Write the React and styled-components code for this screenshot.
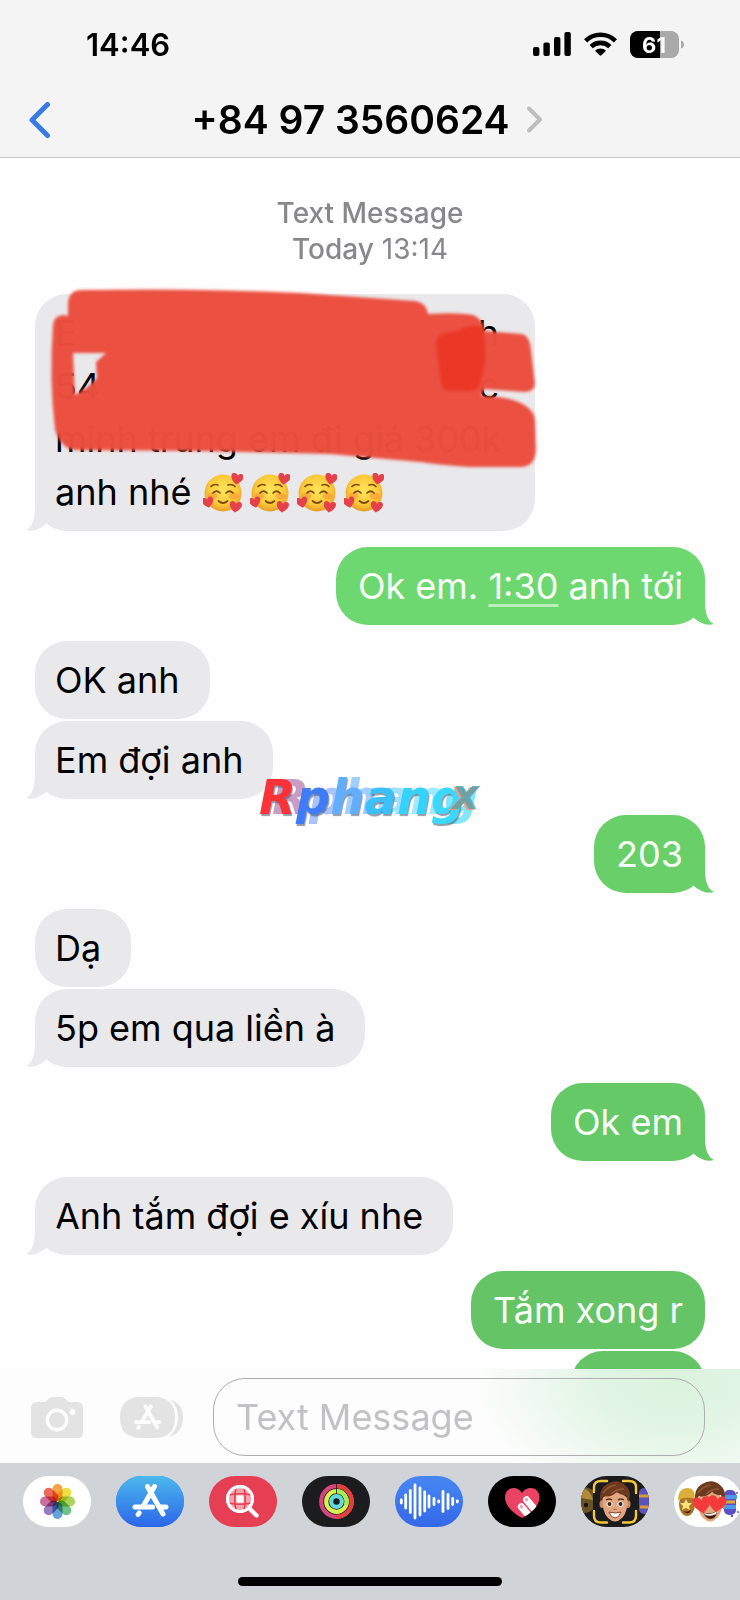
import React from "react";
import styled, { createGlobalStyle, css } from "styled-components";

const GlobalStyle = createGlobalStyle`
  *, *::before, *::after { box-sizing: border-box; }
  body {
    margin: 0;
    background: #fefefe;
    color: #000;
    font-family: Inter, "Liberation Sans", sans-serif;
  }
  button, input { font: inherit; color: inherit; }
  button { border: 0; padding: 0; background: none; cursor: pointer; }
  svg { display: block; }
`;

const Screen = styled.div`
  position: relative;
  display: flex;
  flex-direction: column;
  height: 100vh;
  overflow: hidden;
`;

/* ---------- header ---------- */

const Header = styled.header`
  flex: none;
  background: #f4f4f4;
  border-bottom: 1px solid #c8c8ca;
`;

const StatusBar = styled.div`
  display: flex;
  align-items: center;
  justify-content: space-between;
  height: 82px;
  padding: 6px 56px 0 86px;
`;

const Clock = styled.time`
  font-size: 31px;
  font-weight: 600;
`;

const StatusIcons = styled.div`
  display: flex;
  align-items: center;
  gap: 13px;
`;

const NavBar = styled.div`
  display: grid;
  grid-template-columns: 1fr auto 1fr;
  align-items: center;
  height: 75px;
  padding: 0 34px 0 28px;
`;

const BackButton = styled.button`
  justify-self: start;
`;

const ContactButton = styled.button`
  display: flex;
  align-items: center;
  gap: 16px;
`;

const ContactName = styled.h1`
  margin: 0;
  font-size: 39px;
  font-weight: 600;
  line-height: 48px;
  white-space: nowrap;
`;

/* ---------- thread ---------- */

const Thread = styled.main`
  flex: 1;
  min-height: 0;
  overflow: hidden;
  padding: 37px 35px 0;
`;

const ThreadInfo = styled.p`
  margin: 0 0 27px;
  color: #88888b;
  font-size: 28px;
  line-height: 36px;
  text-align: center;
`;

const Strong = styled.span`
  font-weight: 500;
`;

const Messages = styled.ol`
  display: flex;
  flex-direction: column;
  align-items: flex-start;
  margin: 0;
  padding: 0;
  list-style: none;
`;

const tailShape = css`
  &::after {
    content: "";
    position: absolute;
    bottom: 0;
    ${(p) => (p.$sent ? "right: -9px;" : "left: -9px;")}
    width: 34px;
    height: 34px;
    background: inherit;
    clip-path: ${(p) =>
      p.$sent
        ? 'path("M0 8 L25 0 C25 18 25 28 34 33 C26 35 20 32 14 27 Z")'
        : 'path("M34 8 L9 0 C9 18 9 28 0 33 C8 35 14 32 20 27 Z")'};
  }
`;

const Bubble = styled.li`
  position: relative;
  flex: none;
  align-self: ${(p) => (p.$sent ? "flex-end" : "flex-start")};
  min-width: ${(p) => p.$minWidth || 0}px;
  max-width: 500px;
  min-height: 78px;
  margin-top: ${(p) => (p.$follows ? 2 : 16)}px;
  padding: ${(p) => (p.$sent ? "13px 22px 12px" : "13px 30px 12px 20px")};
  border-radius: 32px;
  background: ${(p) => (p.$sent ? p.$tone : "#e9e9eb")};
  color: ${(p) => (p.$sent ? "#fafffa" : "#000")};
  font-size: 36px;
  line-height: 53px;
  white-space: nowrap;
  ${(p) => p.$tail && tailShape}
  &:first-child { margin-top: 0; }
`;

const TimeLink = styled.a`
  color: inherit;
  text-decoration: underline;
  text-decoration-color: #b9efb9;
  text-decoration-thickness: 3px;
  text-underline-offset: 5px;
  text-decoration-skip-ink: none;
`;

const LongText = styled.div`
  width: 450px;
`;

const Line = styled.div`
  display: flex;
  justify-content: ${(p) => (p.$spread ? "space-between" : "flex-start")};
  align-items: center;
  padding-right: 6px;
`;

const EmojiRun = styled.span`
  display: flex;
  gap: 7px;
  margin-left: 12px;
`;

const Redaction = styled.svg`
  position: absolute;
  top: -14px;
  left: 5px;
  z-index: 1;
`;

const Watermark = styled.div`
  position: absolute;
  top: 766px;
  left: 259px;
  z-index: 2;
  font-family: "DejaVu Sans", sans-serif;
  font-size: 48px;
  font-weight: 700;
  font-style: italic;
  line-height: 62px;
  white-space: nowrap;
`;

const Letter = styled.span`
  color: ${(p) => p.$color};
  text-shadow: 1px 2px 1px #4a5a6a99, 13px 0 0 ${(p) => p.$ghost};
`;

const SmallLetter = styled.span`
  position: absolute;
  right: -14px;
  bottom: 9px;
  font-size: 42px;
  line-height: 48px;
  color: #4fa3aecc;
  text-shadow: -2px 1px 0 #f39a80;
`;

/* ---------- composer ---------- */

const Composer = styled.form`
  flex: none;
  display: flex;
  align-items: center;
  height: 94px;
  padding: 2px 35px 0 31px;
  background:
    radial-gradient(ellipse 200px 130px at 91% 10%, #dbf3de 0%, #e2f5e5 40%, #fdfdfd00 100%),
    #fdfdfd;
`;

const ToolButton = styled.button`
  flex: none;
  margin-right: ${(p) => p.$gap}px;
`;

const TextField = styled.input`
  flex: 1;
  min-width: 0;
  height: 78px;
  padding: 0 22px;
  border: 1px solid #aeaeb0;
  border-radius: 32px;
  outline: 0;
  background: transparent;
  font-size: 36px;
  &::placeholder { color: #c2c2c4; opacity: 1; }
`;

const Footer = styled.footer`
  flex: none;
  height: 137px;
  overflow: hidden;
  background: #d0d3d8;
`;

const AppStrip = styled.ul`
  display: flex;
  gap: 25px;
  margin: 0;
  padding: 13px 0 0 23px;
  list-style: none;
`;

const AppButton = styled.button`
  display: block;
  width: 68px;
  height: 51px;
  overflow: hidden;
  border-radius: 26px;
  background: ${(p) => p.$bg};
`;

const HomeIndicator = styled.div`
  width: 264px;
  height: 9px;
  margin: 50px auto 0;
  border-radius: 5px;
  background: #000;
`;

/* ---------- drawings ---------- */

const Signal = () => (
  <svg width="38" height="24" viewBox="0 0 38 24" role="img" aria-label="Signal">
    <rect x="0" y="15" width="6.4" height="9" rx="2" />
    <rect x="10.4" y="10.5" width="6.4" height="13.5" rx="2" />
    <rect x="21" y="5" width="6.4" height="19" rx="2" />
    <rect x="31.4" y="0" width="6.4" height="24" rx="2" />
  </svg>
);

const Wifi = () => (
  <svg width="33" height="24" viewBox="0 0 33 24" role="img" aria-label="Wi-Fi">
    <g fill="none" stroke="#000" strokeWidth="4.6">
      <path d="M1.6 8.8 A21.5 21.5 0 0 1 31.4 8.8" />
      <path d="M7.2 14.6 A13.4 13.4 0 0 1 25.8 14.6" />
    </g>
    <path d="M11 18.8 A8 8 0 0 1 22 18.8 L17.4 23.3 Q16.5 24 15.6 23.3 Z" />
  </svg>
);

const Battery = () => (
  <svg width="54" height="27" viewBox="0 0 54 27" role="img" aria-label="Battery 61%">
    <defs>
      <clipPath id="cell"><rect width="49" height="27" rx="8" /></clipPath>
    </defs>
    <g clipPath="url(#cell)">
      <rect width="49" height="27" fill="#a9a9a9" />
      <rect width="30" height="27" fill="#000" />
    </g>
    <path d="M51 9.5 Q54 10.5 54 13.5 Q54 16.5 51 17.5 Z" fill="#a9a9a9" />
    <text x="24" y="21.5" textAnchor="middle" fontSize="22" fontWeight="700" fill="#fff">61</text>
  </svg>
);

const Chevron = ({ left }) =>
  left ? (
    <svg width="24" height="38" viewBox="0 0 24 38">
      <path d="M19.5 3.5 L4 19 L19.5 34.5" fill="none" stroke="#3a7ae6" strokeWidth="5" strokeLinecap="round" strokeLinejoin="round" />
    </svg>
  ) : (
    <svg width="17" height="27" viewBox="0 0 17 27">
      <path d="M3 2.5 L14 13.5 L3 24.5" fill="none" stroke="#bebec0" strokeWidth="4" strokeLinecap="round" strokeLinejoin="round" />
    </svg>
  );

const Heart = ({ x, y, s = 1, r = 0, fill = "#e5414a" }) => (
  <path
    transform={`translate(${x} ${y}) rotate(${r}) scale(${s})`}
    fill={fill}
    d="M0 5 C-8 0 -6 -6 -2.5 -5 C-1 -4.8 0 -3.5 0 -2.5 C0 -3.5 1 -4.8 2.5 -5 C6 -6 8 0 0 5Z"
  />
);

const LoveFace = () => (
  <svg width="40" height="40" viewBox="0 0 40 40" role="img" aria-label="🥰">
    <defs>
      <radialGradient id="skin" cx="50%" cy="42%" r="56%">
        <stop offset="0" stopColor="#ffe45c" />
        <stop offset="0.7" stopColor="#fcc938" />
        <stop offset="1" stopColor="#e9a02a" />
      </radialGradient>
    </defs>
    <circle cx="20" cy="20" r="18.5" fill="url(#skin)" />
    <ellipse cx="9.5" cy="23" rx="5" ry="3.5" fill="#f58a3a" opacity="0.5" />
    <ellipse cx="30.5" cy="23" rx="5" ry="3.5" fill="#f58a3a" opacity="0.5" />
    <g fill="none" stroke="#7a4a14" strokeWidth="1.7" strokeLinecap="round">
      <path d="M8 13.5 Q11 10.5 15 12" />
      <path d="M25 12 Q29 10.5 32 13.5" />
      <path d="M10 20 Q13.5 16.5 17 20" />
      <path d="M23 20 Q26.5 16.5 30 20" />
      <path d="M15.5 28 Q20 32 24.5 28" />
    </g>
    <Heart x={34} y={6} s={1.1} r={10} />
    <Heart x={5} y={29.5} s={1.05} r={-12} />
    <Heart x={32.5} y={34} s={1.1} r={8} />
  </svg>
);

const Scribble = () => (
  <Redaction width="506" height="194" viewBox="40 280 506 194" aria-hidden="true">
    <defs>
      <filter id="soft" x="-5%" y="-5%" width="110%" height="110%">
        <feGaussianBlur stdDeviation="1.4" />
      </filter>
    </defs>
    <g filter="url(#soft)">
      <path
        fill="#eb4e3e"
        fillOpacity="0.985"
        fillRule="evenodd"
        d="M68 303 Q69 290 82 290 Q200 288 300 293 L415 301 Q427 303 428 314 Q455 312 473 315 Q482 318 485 331
           L522 334 Q530 336 531 350 L535 384 Q534 392 524 392 L484 389 L481 396 Q500 396 513 400 Q534 407 535 420
           L536 450 Q535 466 522 467 L470 467 Q440 465 420 462 L330 454 L200 451 L76 450 Q60 449 55 429 Q49 380 53 325 Q54 315 64 315 L68 316 Z
           M73 353 L75 395 Q88 388 97 378 L96 362 L106 353 Z"
      />
      <path
        fill="#eb3826"
        d="M436 345 Q436 334 446 333 L460 330 Q468 325 480 326 Q485 328 485 345 Q487 360 481 380 Q480 391 468 391 L448 391 Q441 390 440 376 Z"
      />
    </g>
  </Redaction>
);

const Camera = () => (
  <svg width="52" height="41" viewBox="0 0 52 41">
    <path fill="#e3e3e4" d="M6 5 H14 L18 1.5 Q19.5 0 22 0 H30 Q32.5 0 34 1.5 L38 5 H46 Q52 5 52 11 V35 Q52 41 46 41 H6 Q0 41 0 35 V11 Q0 5 6 5Z" />
    <circle cx="26" cy="23" r="9.7" fill="none" stroke="#fdfdfd" strokeWidth="3.4" />
    <circle cx="41.5" cy="15" r="3" fill="#fdfdfd" />
  </svg>
);

const StoreGlyph = ({ color, ...rest }) => (
  <g fill="none" stroke={color} strokeWidth="5" strokeLinecap="round" {...rest}>
    <path d="M31.5 10.5 L47 38" />
    <path d="M38.5 10.5 L27.5 29.5" />
    <path d="M19 31 H36.5 M44.5 31 H50" />
    <path d="M23.2 37 L22 38.5" />
  </g>
);

const StoreOutline = () => (
  <svg width="64" height="41" viewBox="0 0 64 41">
    <path fill="#e3e3e4" d="M21 0 H34 Q55 0 55 20.5 Q55 41 34 41 H21 Q0 41 0 20.5 Q0 0 21 0Z" />
    <path fill="#e3e3e4" d="M50 2.5 Q63 6 63 20.5 Q63 36 49 40 Q58 32 58 20.5 Q58 9 50 2.5Z" />
    <StoreGlyph color="#fdfdfd" transform="translate(1.5 1.5) scale(0.76)" />
  </svg>
);

const petals = ["#f7941d", "#ecd91f", "#9ccb3b", "#56b86f", "#4a90d2", "#8464b4", "#c4568c", "#e8503f"];

const Petal = styled.rect`
  mix-blend-mode: multiply;
`;

const PhotosArt = () => (
  <g>
    {petals.map((fill, i) => (
      <Petal
        key={fill}
        x="29.5"
        y="8"
        width="10"
        height="17"
        rx="5"
        fill={fill}
        opacity="0.85"
        transform={`rotate(${i * 45} 34.5 25.5)`}
      />
    ))}
  </g>
);

const StoreArt = () => (
  <g>
    <defs>
      <linearGradient id="store" x2="0" y2="1">
        <stop stopColor="#4ab8ec" />
        <stop offset="1" stopColor="#2d66ea" />
      </linearGradient>
    </defs>
    <rect width="68" height="51" fill="url(#store)" />
    <StoreGlyph color="#fff" />
  </g>
);

const ImagesArt = () => (
  <g fill="none" stroke="#fff">
    <circle cx="31" cy="23" r="12.5" fill="#f5a3ac" strokeWidth="3" />
    <rect x="27.5" y="19.5" width="7" height="7" fill="#fff" stroke="none" />
    <g stroke="#e63e53" strokeWidth="1.6">
      <path d="M20 19 Q31 16.5 42 19 M20 27 Q31 29.5 42 27" />
      <path d="M27 12 Q24.5 23 27 34 M35 12 Q37.5 23 35 34" />
    </g>
    <circle cx="31" cy="23" r="12.5" strokeWidth="2.8" />
    <path d="M40.5 32.5 L47.5 39.5" strokeWidth="4.4" strokeLinecap="round" />
  </g>
);

const FitnessArt = () => (
  <g fill="none" strokeWidth="4.2">
    <circle cx="34.5" cy="25.5" r="15.3" stroke="#d6437f" />
    <path d="M34.5 10.2 A15.3 15.3 0 0 1 34.5 40.8" stroke="#e2403f" />
    <circle cx="34.5" cy="25.5" r="10.3" stroke="#d8f04a" />
    <path d="M34.5 15.2 A10.3 10.3 0 0 1 44 29" stroke="#a5ee52" />
    <circle cx="34.5" cy="25.5" r="5.3" stroke="#63d9dd" />
    <path d="M34.5 8 V18" stroke="#1c1c1e" strokeWidth="0.8" />
  </g>
);

const bars = [[6.3, 6], [10.7, 16], [15.3, 25], [20, 36], [25, 30], [29.7, 22], [34, 14], [39, 9], [43.7, 4], [48, 23], [53, 17], [57.7, 9], [62.3, 4]];

const AudioArt = () => (
  <g>
    {bars.map(([x, h]) => (
      <rect key={x} x={x - 1.4} y={25.5 - h / 2} width="2.8" height={h} rx="1.4" fill="#fff" />
    ))}
  </g>
);

const TouchArt = () => (
  <g>
    <defs>
      <clipPath id="touch-heart">
        <path d="M34 42 C24 37 17 29 17 21.5 C17 11 29 9 34 17 C39 9 51.5 11 51.5 21.5 C51.5 29 44 37 34 42Z" />
      </clipPath>
    </defs>
    <g clipPath="url(#touch-heart)">
      <rect width="68" height="51" fill="#ec4264" />
      <g transform="rotate(-40 38 30)" fill="#fff">
        <rect x="30.5" y="24" width="7" height="26" rx="3.5" />
        <rect x="39" y="22" width="7" height="26" rx="3.5" />
        <rect x="32.5" y="25.5" width="3" height="4" rx="1.5" fill="#f2a3b4" />
        <rect x="41" y="23.5" width="3" height="4" rx="1.5" fill="#f2a3b4" />
      </g>
    </g>
  </g>
);

const Face = ({ children }) => (
  <g>
    <ellipse cx="21" cy="28" rx="2.5" ry="4" fill="#c98a63" />
    <ellipse cx="47" cy="28" rx="2.5" ry="4" fill="#c98a63" />
    <path d="M21.5 22 Q21 36 27 42 Q34 49 41 42 Q47 36 46.5 22 Q34 10 21.5 22Z" fill="#e3a780" />
    <path d="M19.5 26 Q17 13 26 8 Q36 2 44 9 Q51 14 48 26 Q46 24 45 19 Q40 20 36 16 Q29 22 23 20 Q21 22 19.5 26Z" fill="#6b3a1f" />
    <path d="M22 17 Q27 10 35 9 M30 18 Q35 13 43 13" fill="none" stroke="#935a34" strokeWidth="1.5" />
    {children}
  </g>
);

const MemojiArt = () => (
  <g>
    <circle cx="3" cy="24" r="13" fill="#6b5328" />
    <path d="M0 12 Q9 12 12 24 L0 22Z" fill="#b08a34" />
    <circle cx="5" cy="29" r="2.2" fill="#1c1410" />
    <rect x="58" y="12" width="12" height="26" rx="5" fill="#5b54b8" />
    <path d="M58 20 H68 M59 31 H68" stroke="#d59a3c" strokeWidth="3" />
    <rect x="12" y="3" width="44" height="45" rx="9" fill="#1b1b1d" />
    <Face>
      <ellipse cx="28.5" cy="28" rx="3" ry="2.6" fill="#fff" />
      <ellipse cx="39.5" cy="28" rx="3" ry="2.6" fill="#fff" />
      <circle cx="28.5" cy="28" r="2" fill="#3b2214" />
      <circle cx="39.5" cy="28" r="2" fill="#3b2214" />
      <path d="M25 24 Q28 22 31 24 M37 24 Q40 22 43 24" fill="none" stroke="#5a3018" strokeWidth="1.5" />
      <path d="M32.5 33 Q34 34 35.5 33" fill="none" stroke="#b06a48" strokeWidth="1.2" />
      <path d="M28 36 Q34 38 40 36 Q38 42 34 42 Q30 42 28 36Z" fill="#fff" stroke="#8a4030" strokeWidth="1" />
    </Face>
    <path
      d="M13 16 V11 Q13 5 20 5 H26 M42 5 H48 Q55 5 55 11 V17 M55 35 V40 Q55 46.5 48 46.5 H42 M26 46.5 H20 Q13 46.5 13 40 V35"
      fill="none"
      stroke="#f3c93c"
      strokeWidth="2.4"
      strokeLinecap="round"
    />
  </g>
);

const StickerArt = () => (
  <g transform="translate(1 0)">
    <ellipse cx="12" cy="28" rx="8" ry="12" fill="#a87425" />
    <path d="M3 24 Q3 12 13 12 Q20 12 20 23 Q12 20 3 24Z" fill="#dcae3a" />
    <path d="M11 23 L13 27 L17 27 L14 30 L15 34 L11 32 L7 34 L8 30 L5 27 L9 27Z" fill="#ffe27a" />
    <path d="M8 35 Q12 37 16 34 Q14 40 8 35Z" fill="#4b1d12" />
    <rect x="49" y="14" width="12" height="25" rx="5" fill="#5a4fc4" />
    <path d="M48 21 H62 M48 31 H61" stroke="#4c9be8" strokeWidth="4" />
    <path d="M49 26 H60" stroke="#e0a73e" strokeWidth="3" />
    <g fill="#6a55d8">
      <circle cx="62" cy="17" r="1" />
      <circle cx="57" cy="40" r="1.2" />
      <circle cx="63" cy="36" r="1" />
    </g>
    <g transform="translate(1 0)">
      <Face>
        <path d="M27 36 Q35 40 41 34 Q41 43 34 43 Q29 42 27 36Z" fill="#4b1d12" />
        <path d="M28 37 Q35 40 41 35 L40 38 Q35 41 29 39Z" fill="#fff" />
      </Face>
      <Heart x={26} y={29} s={1.6} r={-8} fill="#f23b3a" />
      <Heart x={41} y={28} s={1.6} r={8} fill="#f23b3a" />
    </g>
  </g>
);

/* ---------- content ---------- */

const messages = [
  { text: <>Ok em. <TimeLink href="#time">1:30</TimeLink> anh tới</>, sent: true, tail: true, tone: "#6ed870" },
  { text: "OK anh" },
  { text: "Em đợi anh", tail: true, follows: true },
  { text: "203", sent: true, tail: true, tone: "#68cf69" },
  { text: "Dạ" },
  { text: "5p em qua liền à", tail: true, follows: true },
  { text: "Ok em", sent: true, tail: true, tone: "#66c967" },
  { text: "Anh tắm đợi e xíu nhe", tail: true },
  { text: "Tắm xong r", sent: true, tone: "#65c466" },
  { text: "", sent: true, follows: true, tone: "#65c466", minWidth: 134 },
];

const apps = [
  { name: "Photos", bg: "#fff", Art: PhotosArt },
  { name: "App Store", bg: "#2d7cec", Art: StoreArt },
  { name: "Images", bg: "#e63e53", Art: ImagesArt },
  { name: "Fitness", bg: "#1c1c1e", Art: FitnessArt },
  { name: "Audio", bg: "linear-gradient(#4787f2, #3468e8)", Art: AudioArt },
  { name: "Digital Touch", bg: "#000", Art: TouchArt },
  { name: "Memoji", bg: "#1b1b1d", Art: MemojiArt },
  { name: "Stickers", bg: "#fff", Art: StickerArt },
];

const logo = [
  ["R", "#fb3238", "#a45a9f99"],
  ["p", "#3f7cf8", "#6f9dfb99"],
  ["h", "#62aefc", "#62aefc99"],
  ["a", "#3bc0fa", "#5fcdfb99"],
  ["n", "#33d3fb", "#5fdcfb99"],
  ["g", "#3ad9fc", "#62e0fdcc"],
];

export default function App() {
  return (
    <Screen>
      <GlobalStyle />
      <Header>
        <StatusBar>
          <Clock>14:46</Clock>
          <StatusIcons>
            <Signal />
            <Wifi />
            <Battery />
          </StatusIcons>
        </StatusBar>
        <NavBar>
          <BackButton type="button" aria-label="Back"><Chevron left /></BackButton>
          <ContactButton type="button">
            <ContactName>+84 97 3560624</ContactName>
            <Chevron />
          </ContactButton>
        </NavBar>
      </Header>

      <Thread>
        <ThreadInfo>
          <Strong>Text Message</Strong>
          <br />
          <Strong>Today</Strong> 13:14
        </ThreadInfo>
        <Messages>
          <Bubble $tail>
            <LongText>
              <Line $spread><span>E</span><span>h</span></Line>
              <Line $spread><span>54</span><span>c</span></Line>
              <Line>minh trung em đi giá 300k</Line>
              <Line>
                anh nhé
                <EmojiRun>
                  <LoveFace /><LoveFace /><LoveFace /><LoveFace />
                </EmojiRun>
              </Line>
            </LongText>
            <Scribble />
          </Bubble>
          {messages.map((m, i) => (
            <Bubble key={i} $sent={m.sent} $tail={m.tail} $follows={m.follows} $tone={m.tone} $minWidth={m.minWidth}>
              {m.text}
            </Bubble>
          ))}
        </Messages>
      </Thread>

      <Composer onSubmit={(e) => e.preventDefault()}>
        <ToolButton type="button" aria-label="Camera" $gap={37}><Camera /></ToolButton>
        <ToolButton type="button" aria-label="Apps" $gap={29}><StoreOutline /></ToolButton>
        <TextField type="text" aria-label="Text Message" placeholder="Text Message" />
      </Composer>

      <Footer>
        <AppStrip>
          {apps.map(({ name, bg, Art }) => (
            <li key={name}>
              <AppButton type="button" aria-label={name} $bg={bg}>
                <svg width="68" height="51" viewBox="0 0 68 51"><Art /></svg>
              </AppButton>
            </li>
          ))}
        </AppStrip>
        <HomeIndicator />
      </Footer>

      <Watermark>
        {logo.map(([ch, color, ghost]) => (
          <Letter key={ch} $color={color} $ghost={ghost}>{ch}</Letter>
        ))}
        <SmallLetter>x</SmallLetter>
      </Watermark>
    </Screen>
  );
}
